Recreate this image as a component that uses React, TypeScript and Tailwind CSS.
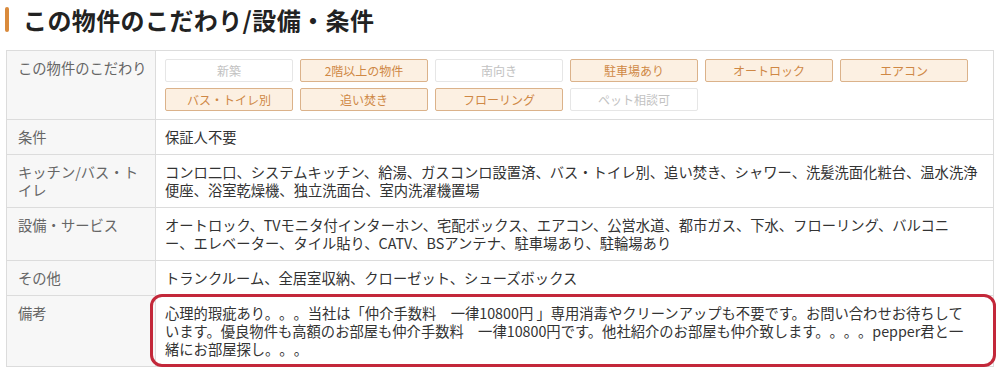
const tags: { label: string; on: boolean }[] = [
  { label: "新築", on: false },
  { label: "2階以上の物件", on: true },
  { label: "南向き", on: false },
  { label: "駐車場あり", on: true },
  { label: "オートロック", on: true },
  { label: "エアコン", on: true },
  { label: "バス・トイレ別", on: true },
  { label: "追い焚き", on: true },
  { label: "フローリング", on: true },
  { label: "ペット相談可", on: false },
];

// lines are broken where the listing page breaks them
const rows: { label: string; lines: string[]; note?: boolean }[] = [
  { label: "条件", lines: ["保証人不要"] },
  {
    label: "キッチン/バス・トイレ",
    lines: [
      "コンロ二口、システムキッチン、給湯、ガスコンロ設置済、バス・トイレ別、追い焚き、シャワー、洗髪洗面化粧台、温水洗浄",
      "便座、浴室乾燥機、独立洗面台、室内洗濯機置場",
    ],
  },
  {
    label: "設備・サービス",
    lines: [
      "オートロック、TVモニタ付インターホン、宅配ボックス、エアコン、公営水道、都市ガス、下水、フローリング、バルコニ",
      "ー、エレベーター、タイル貼り、CATV、BSアンテナ、駐車場あり、駐輪場あり",
    ],
  },
  { label: "その他", lines: ["トランクルーム、全居室収納、クローゼット、シューズボックス"] },
  {
    label: "備考",
    lines: [
      "心理的瑕疵あり。。。当社は「仲介手数料　一律10800円 」専用消毒やクリーンアップも不要です。お問い合わせお待ちして",
      "います。優良物件も高額のお部屋も仲介手数料　一律10800円です。他社紹介のお部屋も仲介致します。。。。pepper君と一",
      "緒にお部屋探し。。。",
    ],
    note: true,
  },
];

const App = () => {
  return (
    <div
      className="w-[1000px] h-[368px] bg-white pl-[5px] overflow-hidden [text-spacing-trim:space-all]"
      style={{ fontFamily: '"Noto Sans CJK JP", "Noto Sans", sans-serif' }}
    >
      {/* Heading */}
      <div className="flex items-center gap-[14px] h-[39px]">
        <span className="w-[4px] h-[25px] rounded-[2px] bg-[#d98a3c]" />
        <h2 className="text-[24px] tracking-[0.4px] font-bold text-[#222] leading-none">
          この物件のこだわり/設備・条件
        </h2>
      </div>

      {/* Table */}
      <table className="mt-[11px] ml-[1px] w-[988px] border-collapse text-[14.3px] leading-[18px]">
        <tbody>
          <tr>
            <th className="w-[149px] border border-[#dcdcdc] bg-[#f7f7f7] pl-[11px] pr-[2px] py-[8px] text-left align-top font-normal text-[#666] whitespace-nowrap">
              この物件のこだわり
            </th>
            <td className="border border-[#dcdcdc] pl-[9px] py-[8px]">
              <div className="flex flex-wrap gap-x-[7px] gap-y-[6px] w-[810px]">
                {tags.map((t) => (
                  <span
                    key={t.label}
                    className={`w-[128px] h-[23px] flex items-center justify-center text-[12px] border rounded-[2px] ${
                      t.on
                        ? "bg-[#fcf0e2] border-[#dbb28a] text-[#cf8845]"
                        : "bg-white border-[#e6e6e6] text-[#c2c2c2]"
                    }`}
                  >
                    {t.label}
                  </span>
                ))}
              </div>
            </td>
          </tr>
          {rows.map((r) => (
            <tr key={r.label}>
              <th className="w-[149px] border border-[#dcdcdc] bg-[#f7f7f7] pl-[11px] pr-[8px] py-[8px] text-left align-top font-normal text-[#666]">
                {r.label}
              </th>
              <td className="relative border border-[#dcdcdc] pl-[9px] pr-[4px] py-[8px] align-top text-[#333]">
                {r.lines.map((line, i) => (
                  <div key={i}>{line}</div>
                ))}
                {r.note && (
                  <div className="absolute left-[-6px] right-[-3px] top-[-2px] bottom-[-1px] border-[3px] border-[#c3283a] rounded-[12px] pointer-events-none" />
                )}
              </td>
            </tr>
          ))}
        </tbody>
      </table>
    </div>
  );
};

export default App;
